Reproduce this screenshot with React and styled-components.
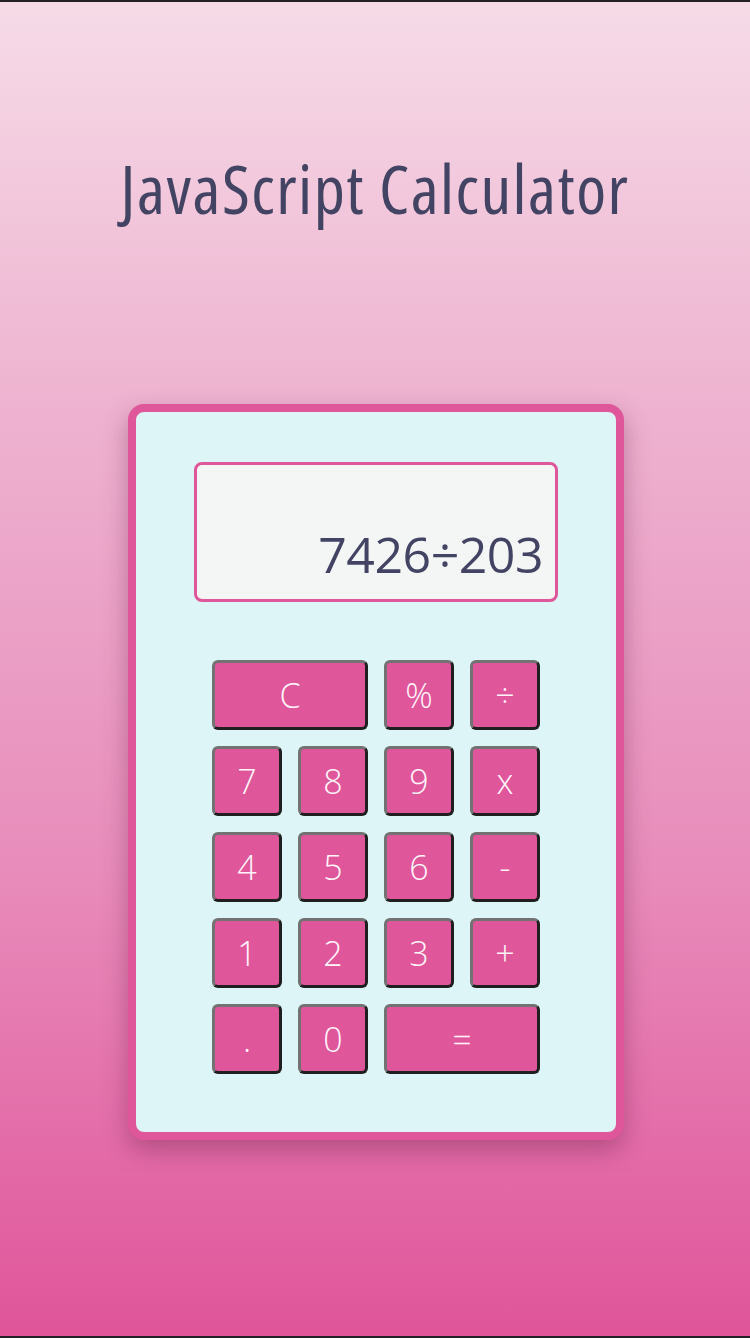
import React from 'react'
import styled, { createGlobalStyle } from 'styled-components'

const GlobalStyle = createGlobalStyle`
  html, body {
    margin: 0;
    padding: 0;
  }
  body {
    border-top: 2px solid #232026;
    border-bottom: 2px solid #232026;
    font-family: "Open Sans", "Noto Sans", sans-serif;
  }
`

const keys = [
  { label: 'C', wide: true },
  { label: '%' },
  { label: '÷' },
  { label: '7' },
  { label: '8' },
  { label: '9' },
  { label: 'x' },
  { label: '4' },
  { label: '5' },
  { label: '6' },
  { label: '-' },
  { label: '1' },
  { label: '2' },
  { label: '3' },
  { label: '+' },
  { label: '.' },
  { label: '0' },
  { label: '=', wide: true },
]

function App() {
  return (
    <>
      <GlobalStyle />
      <Page>
        <Title>JavaScript Calculator</Title>
        <Calculator>
          <Display>
            <Output>7426÷203</Output>
          </Display>
          <Keypad>
            {keys.map((k) => (
              <Key key={k.label} $wide={k.wide}>
                {k.label}
              </Key>
            ))}
          </Keypad>
        </Calculator>
      </Page>
    </>
  )
}

export default App

const Page = styled.div`
  min-height: 1334px;
  box-sizing: border-box;
  display: flex;
  flex-direction: column;
  align-items: center;
  padding-top: 146px;
  background: linear-gradient(180deg, #f6dbe7 0%, #eeb3d0 30%, #e88cbb 65%, #e0559a 100%);
`

const Title = styled.h1`
  margin: 0 0 176px;
  font-family: "Open Sans", sans-serif;
  font-stretch: 75%;
  font-weight: 400;
  font-size: 68px;
  line-height: 80px;
  color: #434463;
  letter-spacing: 1.5px;
`

const Calculator = styled.div`
  width: 496px;
  box-sizing: border-box;
  margin-left: 2px;
  border: 8px solid #e0569a;
  border-radius: 16px;
  background: #ddf5f7;
  padding: 50px 0 58px;
  display: flex;
  flex-direction: column;
  align-items: center;
  gap: 58px;
  box-shadow: 0 10px 24px rgba(90, 20, 60, 0.35);
`

const Display = styled.div`
  width: 364px;
  height: 140px;
  box-sizing: border-box;
  border: 3px solid #e0569a;
  border-radius: 8px;
  background: #f4f6f6;
  display: flex;
  align-items: flex-end;
  justify-content: flex-end;
  padding: 0 12px 20px;
`

const Output = styled.div`
  font-family: "Open Sans", sans-serif;
  font-stretch: 100%;
  font-weight: 400;
  font-size: 50px;
  letter-spacing: -0.5px;
  line-height: 1;
  color: #434463;
`

const Keypad = styled.div`
  display: grid;
  grid-template-columns: repeat(4, 70px);
  grid-auto-rows: 70px;
  gap: 16px;
`

const Key = styled.button`
  grid-column: span ${(p) => (p.$wide ? 2 : 1)};
  box-sizing: border-box;
  border: 3px solid;
  border-color: #727272 #1f1f1f #1f1f1f #727272;
  border-radius: 6px;
  background: #e0569a;
  color: #fff4fa;
  font-family: "Open Sans", sans-serif;
  font-stretch: 100%;
  font-size: 34px;
  font-weight: 300;
  padding: 0;
  cursor: pointer;
`
